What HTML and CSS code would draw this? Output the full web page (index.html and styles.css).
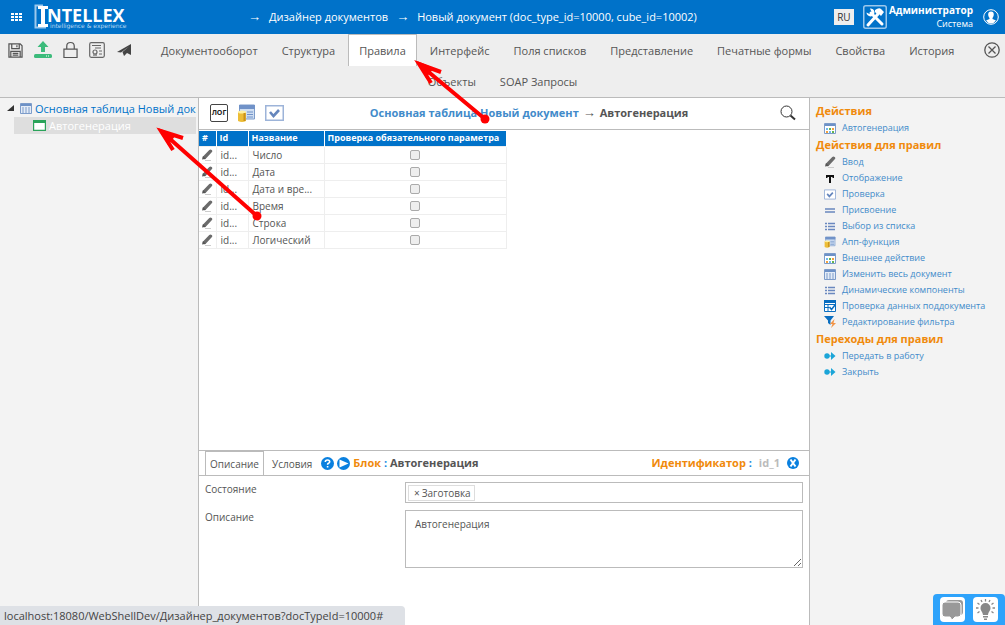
FILE: index.html
```html
<!DOCTYPE html>
<html lang="ru">
<head>
<meta charset="utf-8">
<title>Intellex — Дизайнер документов</title>
<link rel="stylesheet" href="styles.css">
</head>
<body>
<svg class="defs" aria-hidden="true">
  <symbol id="pencil" viewBox="0 0 12 12"><path d="M3.500 8.500L9.500 2.200" stroke="#6b6b6b" stroke-width="3.400" stroke-linecap="round"/><path d="M1 10.500l1-3.500 2.700 2.700z" fill="#555"/><path d="M4 11.500h6" stroke="#ccc"/></symbol>
  <symbol id="window" viewBox="0 0 12 11"><path d="M.5.5h11v10H.5z" fill="#e4ecf7" stroke="#7d9cca"/><path d="M1 1h10v2H1z" fill="#6d91c6"/><path d="M2 5h8M2 7h8M2 9h8" stroke="#7d9cca" stroke-dasharray="2 1"/></symbol>
  <symbol id="palette" viewBox="0 0 12 11"><path d="M.5.5h11v10H.5z" fill="#fff" stroke="#7d9cca"/><path d="M1 1h10v2H1z" fill="#6d91c6"/><path d="M2 5h2v2H2zM5 8h2v2H5z" fill="#70b9ed"/><path d="M5 5h2v2H5zM8 8h2v2H8z" fill="#65b54e"/><path d="M8 5h2v2H8zM2 8h2v2H2z" fill="#f2a03d"/></symbol>
  <symbol id="check" viewBox="0 0 19 16"><path d="M.75.75h17.500v14.500H.75z" fill="#fff" stroke="#9db4d9" stroke-width="1.500"/><path d="M5 7l3.500 4L14 5" fill="none" stroke="#6586bd" stroke-width="2.600"/></symbol>
  <symbol id="list" viewBox="0 0 12 11"><path d="M1 2.500h2M1 5.500h2M1 8.500h2M4 2.500h7M4 5.500h7M4 8.500h7" stroke="#6a88bf" stroke-width="1.500"/></symbol>
  <symbol id="database" viewBox="0 0 19 18"><path d="M2.500 1h15v14h-15z" fill="#cfdef2" stroke="#7d9cca"/><path d="M2 1h16v4H2z" fill="#7092c8"/><path d="M10 8h6M10 10.500h6M10 13h6" stroke="#7092c8"/><path d="M1 8h8v9q-4 2-8 0z" fill="#edbd36"/><ellipse cx="5" cy="8" rx="4" ry="1.500" fill="#fff0a0"/><path d="M7.500 9v8" stroke="#c8911c" stroke-width="2"/></symbol>
  <symbol id="next" viewBox="0 0 12 10"><circle cx="3" cy="5" r="2.700" fill="#1ba5d8"/><path d="M7 1l4.500 4L7 9z" fill="#1ba5d8"/><path d="M5 5h3" stroke="#1ba5d8"/></symbol>
</svg>

<header class="topbar">
  <button class="apps" aria-label="Приложения"><svg width="11" height="9" viewBox="0 0 11 9"><path d="M0 0h3v2H0zM4 0h3v2H4zM8 0h3v2H8zM0 3h3v2H0zM4 3h3v2H4zM8 3h3v2H8zM0 6h3v2H0zM4 6h3v2H4zM8 6h3v2H8z" fill="#fff"/></svg></button>
  <a class="logo" href="#" aria-label="Intellex">
    <svg width="94" height="26" viewBox="0 0 94 26"><path d="M9 1.500H1.500V23.500H12" fill="none" stroke="#9cc8ec" stroke-width="2"/><path d="M4 2h10v3h-3v15h3v3H4v-3h3V5H4z" fill="#fff"/><text class="logo-name" x="13" y="18">NTELLEX</text><text class="logo-tag" x="16" y="24">intelligence &amp; experience</text></svg>
  </a>
  <nav class="crumbs" aria-label="Путь"><span class="arrow">→</span><a href="#">Дизайнер документов</a><span class="arrow">→</span><a href="#">Новый документ (doc_type_id=10000, cube_id=10002)</a></nav>
  <button class="lang">RU</button>
  <button class="tools" aria-label="Инструменты"><svg width="24" height="24" viewBox="0 0 24 24"><rect x=".75" y=".75" width="22.500" height="22.500" rx="2" fill="none" stroke="#9cc8ec" stroke-width="1.500"/><path d="M8 8l11 11" stroke="#fff" stroke-width="3" stroke-linecap="round"/><path d="M7 3.500a4 4 0 1 1-3.500 4l3 1.500 2-2z" fill="#fff"/><path d="M5 20l10-11" stroke="#fff" stroke-width="3" stroke-linecap="round"/><path d="M12 5q4-3 6-1l3 3-3 4-2-2-1 1-3-3z" fill="#fff"/></svg></button>
  <div class="user"><b>Администратор</b><span>Система</span></div>
  <button class="avatar" aria-label="Профиль"><svg width="16" height="16" viewBox="0 0 16 16"><circle cx="8" cy="8" r="7.300" fill="none" stroke="#fff"/><path d="M8 2.500c-4 0-3 5-1.500 6.500v1L3 11.500q2 3 5 3t5-3L9.500 10V9C11 7.500 12 2.500 8 2.500z" fill="#fff"/></svg></button>
</header>

<div class="toolbar">
  <div class="toolbar-main">
    <div class="tool-icons">
      <button aria-label="Сохранить"><svg width="15" height="15" viewBox="0 0 16 16" fill="none" stroke="#555" stroke-width="1.300"><path d="M1 1h12l2 2v12H1z"/><path d="M4 1v5h8V1M9.500 2.500v2M3 15V9h10v6M5 11h6M5 13h6"/></svg></button>
      <button aria-label="Выгрузить"><svg width="18" height="18" viewBox="0 0 18 18" fill="#3cbb7b"><path d="M9 0l5.500 6H11v5H7V6H3.500z"/><rect y="13" width="18" height="4" rx="1.500"/><path d="M12 15h1M14 15h1" stroke="#fff"/></svg></button>
      <button aria-label="Заблокировать"><svg width="15" height="18" viewBox="0 0 16 18" fill="none" stroke="#555" stroke-width="1.300"><path d="M1 8h14v9H1zM4 8V5q0-4 4-4t4 4v3"/></svg></button>
      <button aria-label="Сертификат"><svg width="16" height="16" viewBox="0 0 16 16" fill="none" stroke="#666" stroke-width="1.200"><rect x=".7" y=".7" width="14.600" height="14.600" rx="1.500"/><path d="M3 3.500h9M6 6h6M10 9h3M10 12h3"/><circle cx="6" cy="10" r="2"/><path d="M5 12v2M7 12v2"/></svg></button>
      <button aria-label="Отправить"><svg width="16" height="16" viewBox="0 0 16 16"><path d="M1 10L15 2v11l-4-2-3 3-1.500-4L13 4.500 5 10.500z" fill="#444"/></svg></button>
    </div>
    <nav class="tabs" aria-label="Разделы">
      <a href="#">Документооборот</a><a href="#">Структура</a><a class="active" href="#">Правила</a><a href="#">Интерфейс</a><a href="#">Поля списков</a><a href="#">Представление</a><a href="#">Печатные формы</a><a href="#">Свойства</a><a href="#">История</a>
    </nav>
    <button class="close" aria-label="Закрыть"><svg width="16" height="16" viewBox="0 0 16 16" fill="none" stroke="#555" stroke-width="1.300"><circle cx="8" cy="8" r="7.200"/><path d="M4.500 4.500l7 7m0-7l-7 7"/></svg></button>
  </div>
  <nav class="tabs tabs-more" aria-label="Дополнительные разделы"><a href="#">Объекты</a><a href="#">SOAP Запросы</a></nav>
</div>

<div class="workspace">
  <aside class="tree">
    <div class="tree-root"><svg width="7" height="7" viewBox="0 0 7 7"><path d="M7 0v6H0z" fill="#333"/></svg><svg width="12" height="11"><use href="#window"/></svg><a href="#">Основная таблица Новый док</a></div>
    <div class="tree-leaf"><svg width="13" height="11" viewBox="0 0 13 11"><path d="M.6.6h11.800v9.800H.6z" fill="#fff" stroke="#2aa35a" stroke-width="1.200"/><path d="M0 0h13v3H0z" fill="#2aa35a"/></svg><a href="#">Автогенерация</a></div>
  </aside>

  <main class="center">
    <div class="center-head">
      <button class="log" aria-label="Лог">ЛОГ</button>
      <button aria-label="База"><svg width="19" height="18"><use href="#database"/></svg></button>
      <button aria-label="Проверка"><svg width="19" height="16"><use href="#check"/></svg></button>
      <h1><a href="#">Основная таблица Новый документ</a><span class="arrow">→</span>Автогенерация</h1>
      <button aria-label="Поиск"><svg width="16" height="16" viewBox="0 0 16 16" fill="none" stroke="#333"><circle cx="6.500" cy="6.500" r="5.500"/><path d="M10.500 10.500l4.500 4" stroke-width="2"/></svg></button>
    </div>
    <div class="grid-area">
      <table>
        <thead><tr><th class="c-edit">#</th><th class="c-id">Id</th><th class="c-name">Название</th><th class="c-check">Проверка обязательного параметра</th></tr></thead>
        <tbody>
          <tr><td><svg width="12" height="12"><use href="#pencil"/></svg></td><td>id...</td><td>Число</td><td><input type="checkbox" aria-label="Число"></td></tr>
          <tr><td><svg width="12" height="12"><use href="#pencil"/></svg></td><td>id...</td><td>Дата</td><td><input type="checkbox" aria-label="Дата"></td></tr>
          <tr><td><svg width="12" height="12"><use href="#pencil"/></svg></td><td>id...</td><td>Дата и вре...</td><td><input type="checkbox" aria-label="Дата и время"></td></tr>
          <tr><td><svg width="12" height="12"><use href="#pencil"/></svg></td><td>id...</td><td>Время</td><td><input type="checkbox" aria-label="Время"></td></tr>
          <tr><td><svg width="12" height="12"><use href="#pencil"/></svg></td><td>id...</td><td>Строка</td><td><input type="checkbox" aria-label="Строка"></td></tr>
          <tr><td><svg width="12" height="12"><use href="#pencil"/></svg></td><td>id...</td><td>Логический</td><td><input type="checkbox" aria-label="Логический"></td></tr>
        </tbody>
      </table>
    </div>
    <section class="detail">
      <div class="detail-head">
        <button class="dtab active">Описание</button><button class="dtab">Условия</button>
        <button class="round" aria-label="Справка"><svg width="13" height="13" viewBox="0 0 13 13"><circle cx="6.500" cy="6.500" r="6.500" fill="#0a80df"/><path d="M4.300 5q0-2 2.200-2t2.200 1.800q0 1-1.200 1.500-.9.400-.9 1.500M6.600 9v1.500" fill="none" stroke="#fff" stroke-width="1.600"/></svg></button>
        <button class="round" aria-label="Запуск"><svg width="13" height="13" viewBox="0 0 13 13"><circle cx="6.500" cy="6.500" r="6.500" fill="#0a80df"/><path d="M2.500 2.500l9 4-9 4z" fill="#fff"/></svg></button>
        <div class="block"><b class="orange">Блок</b> <b class="blue">:</b> <b>Автогенерация</b></div>
        <div class="ident"><b class="orange">Идентификатор</b> <b class="blue">:</b></div>
        <b class="ident-value">id_1</b>
        <button class="round" aria-label="Закрыть блок"><svg width="12" height="12" viewBox="0 0 12 12"><circle cx="6" cy="6" r="6" fill="#0a80df"/><path d="M3.500 2.500l5 7m0-7l-5 7" stroke="#fff" stroke-width="2"/></svg></button>
      </div>
      <form class="fields">
        <label for="state">Состояние</label>
        <div class="tagbox"><span class="tag"><button type="button" aria-label="Удалить">×</button>Заготовка</span><input id="state" type="text"></div>
        <label for="descr">Описание</label>
        <textarea id="descr">Автогенерация</textarea>
      </form>
    </section>
  </main>

  <aside class="actions">
    <h2>Действия</h2>
    <ul><li><svg width="12" height="11"><use href="#palette"/></svg><a href="#">Автогенерация</a></li></ul>
    <h2>Действия для правил</h2>
    <ul>
      <li><svg width="12" height="12"><use href="#pencil"/></svg><a href="#">Ввод</a></li>
      <li><svg width="12" height="11" viewBox="0 0 12 11"><path d="M2 2h8v3H9L8 4H7v6H5V4H4L3 5H2z" fill="#111"/></svg><a href="#">Отображение</a></li>
      <li><svg width="12" height="11"><use href="#check"/></svg><a href="#">Проверка</a></li>
      <li><svg width="12" height="11" viewBox="0 0 12 11"><path d="M1 4h10M1 7h10" stroke="#6a88bf" stroke-width="1.700"/></svg><a href="#">Присвоение</a></li>
      <li><svg width="12" height="11"><use href="#list"/></svg><a href="#">Выбор из списка</a></li>
      <li><svg width="12" height="12"><use href="#database"/></svg><a href="#">Апп-функция</a></li>
      <li><svg width="12" height="11"><use href="#palette"/></svg><a href="#">Внешнее действие</a></li>
      <li><svg width="12" height="11"><use href="#window"/></svg><a href="#">Изменить весь документ</a></li>
      <li><svg width="12" height="11"><use href="#list"/></svg><a href="#">Динамические компоненты</a></li>
      <li><svg width="12" height="12" viewBox="0 0 12 12"><path d="M.5.5h11v11H.5zM1 4.500h10M4 4v7M1 7.500h4" fill="#fff" stroke="#0a6ec0"/><path d="M0 0h12v3H0z" fill="#0a6ec0"/><path d="M5.500 7l2 2.500L11 5" fill="none" stroke="#0a6ec0" stroke-width="1.500"/></svg><a href="#">Проверка данных поддокумента</a></li>
      <li><svg width="12" height="12" viewBox="0 0 12 12"><path d="M0 0h10L6.500 4.500V9L4 7V4.500z" fill="#0a6ec0"/><path d="M10.500 3L6 8h2.500L7 12l5-5H9.500z" fill="#f29446"/></svg><a href="#">Редактирование фильтра</a></li>
    </ul>
    <h2>Переходы для правил</h2>
    <ul>
      <li><svg width="12" height="10"><use href="#next"/></svg><a href="#">Передать в работу</a></li>
      <li><svg width="12" height="10"><use href="#next"/></svg><a href="#">Закрыть</a></li>
    </ul>
  </aside>
</div>

<div class="status">localhost:18080/WebShellDev/Дизайнер_документов?docTypeId=10000#</div>
<div class="helper">
  <button aria-label="Чат"><svg width="25" height="25" viewBox="0 0 25 25"><rect x="6" y="3" width="17" height="15" rx="3" fill="#999"/><path d="M5 5h13q3 0 3 3v9q0 3-3 3h-3l-3 3-2-3H5q-3 0-3-3V8q0-3 3-3z" fill="#999" stroke="#fff"/></svg></button>
  <button aria-label="Подсказка"><svg width="25" height="25" viewBox="0 0 25 25"><path d="M12.500 6a5 5 0 0 1 5 5c0 3-2 3.500-2.500 7h-5c-.5-3.500-2.500-4-2.500-7a5 5 0 0 1 5-5zM10 19h5v1.500h-5zM11 21.500h3V23h-3z" fill="#888"/><path d="M12.500 2v2.500M8 3l1 2M17 3l-1 2M4.500 6l2 1.500M20.500 6l-2 1.500M3 11h2.500M22 11h-2.500M4.500 16l2-1.500M20.500 16l-2-1.500" stroke="#888" stroke-width="1.300"/></svg></button>
</div>

<svg class="pointers" width="1005" height="625" viewBox="0 0 1005 625" fill="none" stroke="#f00" stroke-width="4" aria-hidden="true">
  <path d="M485 119L419 64M441 72L419 64l12 19"/><circle cx="485" cy="119" r="4.500" fill="#f00" stroke="none"/><path d="M417 61l17 7-8 10z" fill="#f00" stroke="none"/>
  <path d="M257 216L161 131M183 138l-22-7 12 19"/><circle cx="257" cy="216" r="4.500" fill="#f00" stroke="none"/><path d="M158 128l18 7-8 10z" fill="#f00" stroke="none"/>
</svg>
</body>
</html>
```
FILE: styles.css
```css
* { box-sizing: border-box; }
body {
  margin: 0;
  height: 100vh;
  display: flex;
  flex-direction: column;
  overflow: hidden;
  font: 10px/16px "Open Sans", "Noto Sans", sans-serif;
  color: #555;
  background: #fff;
}
button { padding: 0; border: 0; background: none; font: inherit; color: inherit; cursor: pointer; }
a { color: inherit; text-decoration: none; }
svg { display: block; flex: none; }
.defs { position: absolute; width: 0; height: 0; }
.arrow { font-family: "Liberation Sans", sans-serif; font-size: 13px; font-weight: normal; }

.topbar { display: flex; align-items: center; flex: none; height: 34px; padding: 0 6px 0 11px; background: #0072c9; color: #fff; }
.logo { margin-left: 12px; }
.logo-name { font: bold 18px "Open Sans", sans-serif; fill: #fff; }
.logo-tag { font: 6px "DejaVu Sans", sans-serif; fill: #b5d6f1; }
.crumbs { flex: 1; display: flex; gap: 8px; margin-left: 120px; font-size: 11px; white-space: nowrap; }
.lang { width: 20px; height: 16px; margin-right: 9px; background: #eee; color: #333; line-height: 14px; }
.user { display: flex; flex-direction: column; margin-left: 2px; font-size: 9px; line-height: 13px; text-align: right; }
.user b { font-size: 10px; }
.avatar { margin-left: 10px; }

.toolbar { flex: none; height: 64px; background: #eee; border-bottom: 1px solid #bbb; }
.toolbar-main { display: flex; height: 32px; padding-right: 5px; }
.tool-icons { display: flex; align-items: center; gap: 11px; width: 150px; padding-left: 8px; flex: none; }
.tabs { display: flex; gap: 2px; font-size: 11px; white-space: nowrap; }
.tabs a { height: 32px; padding: 0 10px; border: 1px solid transparent; border-bottom: 0; line-height: 32px; }
.tabs .active { background: #fff; border-color: #bbb; }
.tabs-more { justify-content: center; }
.tabs-more a { line-height: 30px; }
.close { margin-left: auto; }

.workspace { flex: 1; min-height: 0; display: flex; }
.tree { flex: none; width: 199px; padding: 2px 2px 0 0; background: #f3f3f3; border-right: 1px solid #bbb; overflow: hidden; white-space: nowrap; }
.tree-root { display: flex; align-items: center; gap: 3px; height: 17px; margin-left: 7px; font-size: 11px; color: #0072c9; }
.tree-root svg + svg { margin-left: 3px; }
.tree-leaf { display: flex; align-items: center; gap: 3px; height: 17px; margin-left: 14px; padding-left: 19px; background: #dedede; font-size: 11px; color: #fff; }

.center { flex: 1; min-width: 0; display: flex; flex-direction: column; }
.center-head { display: flex; align-items: center; gap: 9px; flex: none; height: 32px; padding: 0 13px 2px 11px; border-bottom: 1px solid #bbb; }
.center-head h1 { flex: 1; margin: 0; padding-right: 6px; font-size: 11px; line-height: 16px; text-align: center; }
.center-head h1 a { color: #428bca; }
.center-head .arrow { margin: 0 4px; }
.log { width: 18px; height: 18px; border: 1px solid #444; border-radius: 2px; font-size: 7px; font-weight: bold; line-height: 14px; color: #222; }
.grid-area { flex: 1; min-height: 0; padding-top: 1px; overflow: auto; }
table { table-layout: fixed; border-collapse: collapse; width: 308px; }
th { height: 15px; padding: 0 3px; background: #0072c9; border-right: 1px solid #fff; color: #fff; font-size: 9px; line-height: 14px; text-align: left; white-space: nowrap; }
td { height: 17px; padding: 0 4px; border: 1px solid #eee; line-height: 14px; white-space: nowrap; }
td:first-child { padding: 0 2px; border-left: 0; }
td:last-child { text-align: center; }
.c-edit { width: 17px; }
.c-id { width: 32px; }
.c-name { width: 76px; }
td input { appearance: none; display: block; width: 10px; height: 10px; margin: 0 auto; border: 1px solid #aaa; border-radius: 2px; background: #eee; }

.detail { flex: 0 0 28vh; border-top: 1px solid #bbb; }
.detail-head { display: flex; align-items: center; gap: 3px; height: 25px; padding: 0 10px 0 6px; border-bottom: 1px solid #bbb; font-size: 11px; }
.dtab { height: 24px; padding: 0 4px; border: 1px solid transparent; border-bottom: 0; font-size: 10px; }
.dtab.active { border-color: #bbb; }
.dtab + .round { margin-left: 1px; }
.orange { color: #f08a0c; }
.blue { color: #1285de; }
.ident { margin-left: auto; }
.ident-value { margin: 0 4px; color: #bbb; }
.fields { display: grid; grid-template-columns: 192px 1fr; gap: 7px 8px; padding: 6px 6px 0; }
.fields label { line-height: 14px; }
.tagbox { display: flex; align-items: center; height: 21px; padding: 0 2px; border: 1px solid #bbb; }
.tag { display: flex; gap: 2px; padding: 0 3px 0 5px; border: 1px solid #ddd; line-height: 14px; }
.tagbox input { flex: 1; min-width: 0; border: 0; outline: 0; font: inherit; }
.fields textarea { height: 58px; padding: 5px 9px; border: 1px solid #bbb; background: #fff; color: inherit; font: inherit; resize: vertical; }

.actions { flex: none; width: 196px; padding: 4px 0 0 6px; background: #f3f3f3; border-left: 1px solid #bbb; white-space: nowrap; font-size: 9px; color: #428bca; }
.actions h2 { margin: 0; font-size: 11px; line-height: 18px; color: #f08a0c; }
.actions ul { margin: 0; padding: 0; list-style: none; }
.actions li { display: flex; align-items: center; gap: 6px; height: 16px; padding-left: 8px; }

.status { position: fixed; left: 0; bottom: 0; padding: 2px 22px 1px 4px; background: #dee1e6; border-radius: 0 4px 0 0; font-size: 11px; color: #444; }
.helper { position: fixed; right: 0; bottom: 0; display: flex; gap: 8px; padding: 3px 7px; background: #2ea3fb; border-radius: 4px 4px 0 0; }
.helper button { background: #fff; border-radius: 4px; }
.pointers { position: absolute; left: 0; top: 0; pointer-events: none; }
```
